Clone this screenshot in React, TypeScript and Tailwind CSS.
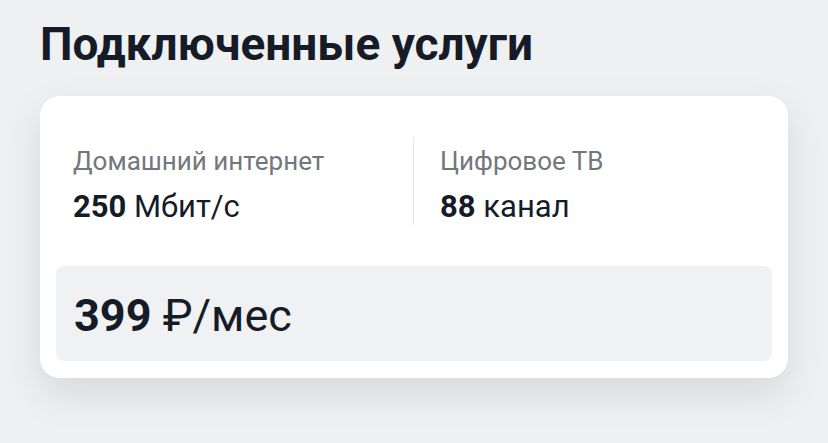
const font = { fontFamily: 'Roboto, "Noto Sans", sans-serif' };

export default function App() {
  return (
    <div
      className="min-h-[443px] w-full bg-[#eff0f2] px-10 pt-[12px] text-[#161c27]"
      style={font}
    >
      <h1 className="text-[46px] font-bold leading-[64px]">Подключенные услуги</h1>
      <div className="mt-[20px] w-[748px] rounded-[20px] bg-white px-4 pb-[17px] pt-[41px] shadow-[0_16px_40px_rgba(0,0,0,0.10)]">
        <div className="flex px-[17px]">
          <div className="h-[88px] w-[341px] border-r border-[#e4e5e7] pt-[8px]">
            <div className="text-[26px] leading-[32px] text-[#73777c]">Домашний интернет</div>
            <div className="mt-[12px] text-[31px] leading-[36px]">
              <span className="font-bold">250</span> Мбит/с
            </div>
          </div>
          <div className="h-[88px] pl-[26px] pt-[8px]">
            <div className="text-[26px] leading-[32px] text-[#73777c]">Цифровое ТВ</div>
            <div className="mt-[12px] text-[31px] leading-[36px]">
              <span className="font-bold">88</span> канал
            </div>
          </div>
        </div>
        <div className="mt-[41px] flex h-[95px] items-center rounded-[8px] bg-[#f0f1f3] px-[18px] pt-[3px]">
          <span className="text-[45px] leading-none">
            <span className="font-bold">399</span> ₽/мес
          </span>
        </div>
      </div>
    </div>
  );
}
